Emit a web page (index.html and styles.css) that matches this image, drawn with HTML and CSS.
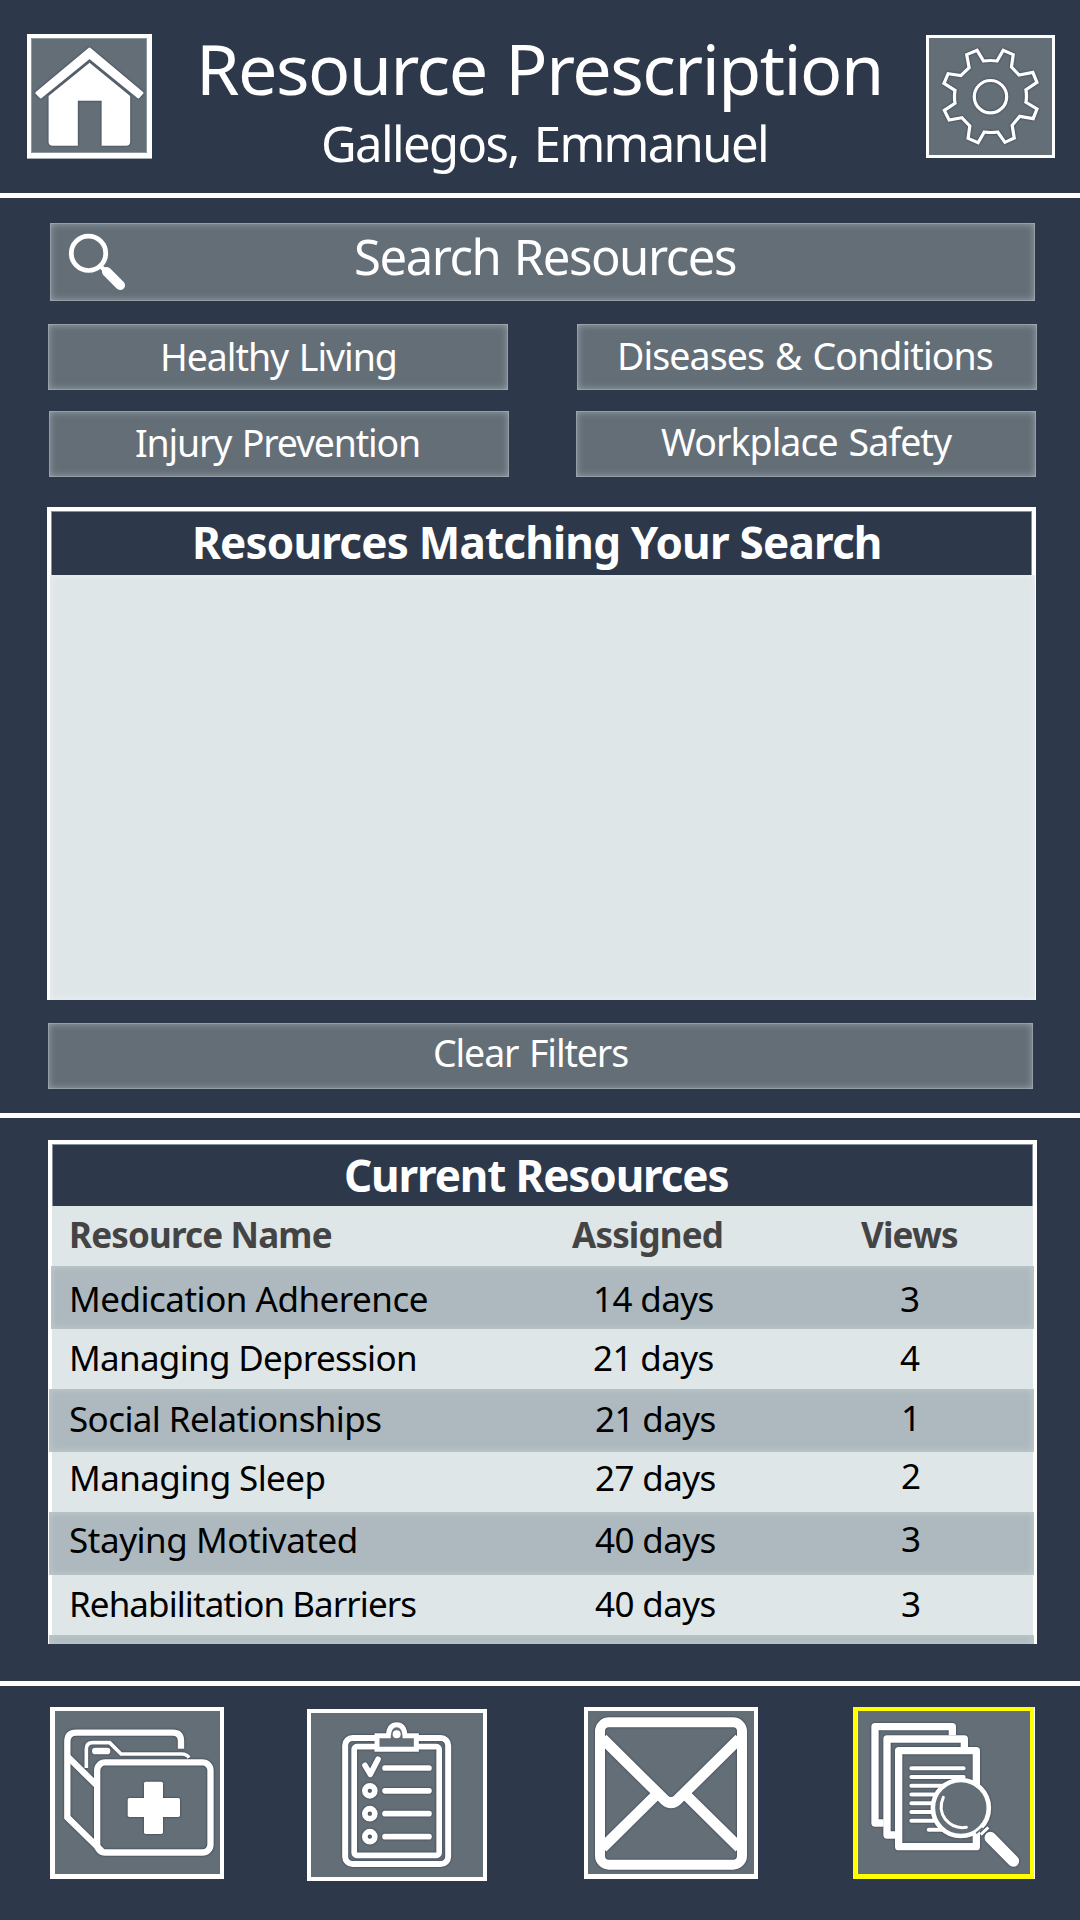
FILE: index.html
```
<!DOCTYPE html>
<html lang="en">
<head>
<meta charset="utf-8">
<title>Resource Prescription</title>
<link rel="stylesheet" href="styles.css">
</head>
<body>
<header class="header">
  <a class="home">
    <svg viewBox="31 38 116 115"><g transform="scale(.3444 .33333)" fill="#fff">
      <path d="M260 146L413 279L402 292L260 173L118 292L106 279Z" stroke="#fff" stroke-width="7" stroke-linejoin="round"/>
      <path d="M260 188L378 288V426Q378 437 366 437H295V302H226V437H153Q141 437 141 426V288Z"/>
    </g></svg>
  </a>
  <div class="titles">
    <h1 class="title">Resource Prescription</h1>
    <p class="patient">Gallegos, Emmanuel</p>
  </div>
  <a class="settings">
    <svg viewBox="929 38 123 117"><g transform="translate(540 0) scale(.3444 .33333)" fill="none" stroke="#fff" stroke-width="9.5">
      <path d="M1239 164L1269 151L1288 183Q1308 180 1327 183L1345 151L1374 164L1369 201L1391 225L1431 217L1443 247L1411 269Q1414 290 1411 307L1443 327L1432 356L1393 349L1371 376L1377 414L1350 427L1329 396Q1309 399 1290 396L1272 428L1243 415L1248 378L1225 353L1188 360L1174 331L1205 310Q1202 290 1205 271L1173 250L1185 221L1222 227L1246 203Z"/>
      <ellipse cx="1308" cy="290" rx="47" ry="48.5"/>
    </g></svg>
  </a>
</header>

<main class="search-area">
  <div class="field search">
    <svg viewBox="60 228 80 68"><g transform="scale(.3444 .33333)" fill="none" stroke="#fff" stroke-linecap="round">
      <ellipse cx="257" cy="760" rx="50" ry="51.5" stroke-width="14"/>
      <path d="M292 799L310 817" stroke-width="13"/>
      <path d="M310 815L349 856" stroke-width="28"/>
    </g></svg>
    <span>Search Resources</span>
  </div>
  <div class="filters">
    <button class="field healthy">Healthy Living</button>
    <button class="field diseases">Diseases &amp; Conditions</button>
    <button class="field injury">Injury Prevention</button>
    <button class="field workplace">Workplace Safety</button>
  </div>
  <section class="matches">
    <h2 class="panel-title">Resources Matching Your Search</h2>
    <div class="results"></div>
  </section>
  <button class="field clear">Clear Filters</button>
</main>

<section class="current-area">
  <div class="current">
    <h2 class="panel-title">Current Resources</h2>
    <div class="row head"><span>Resource Name</span><span>Assigned</span><span>Views</span></div>
    <div class="row dark r1"><span>Medication Adherence</span><span>14 days</span><span>3</span></div>
    <div class="row r2"><span>Managing Depression</span><span>21 days</span><span>4</span></div>
    <div class="row dark r3"><span>Social Relationships</span><span>21 days</span><span>1</span></div>
    <div class="row r4"><span>Managing Sleep</span><span>27 days</span><span>2</span></div>
    <div class="row dark r5"><span>Staying Motivated</span><span>40 days</span><span>3</span></div>
    <div class="row r6"><span>Rehabilitation Barriers</span><span>40 days</span><span>3</span></div>
    <div class="row dark r7"></div>
  </div>
</section>

<nav class="nav">
  <a class="tab records">
    <svg viewBox="55 1711 165 163"><g transform="translate(40 1690) scale(.33333)" fill="none" stroke="#fff" stroke-width="19">
      <path d="M423 176V153Q423 128 398 128H109Q82 128 82 155V382L186 484"/>
      <path d="M84 201L170 286"/>
      <path d="M139 234V177Q139 158 158 158H209L243 192H426Q440 192 447 203" stroke-width="11"/>
      <rect x="171.500" y="217" width="340" height="270.500" rx="24"/>
      <g fill="#fff" stroke="none">
        <rect x="156" y="173" width="55" height="20" rx="10"/>
        <rect x="312" y="275" width="57" height="157" rx="5"/>
        <rect x="263" y="324" width="157" height="57" rx="5"/>
      </g>
    </g></svg>
  </a>
  <a class="tab checklist">
    <svg viewBox="311 1713 172 164"><g transform="translate(290 1690) scale(.33333)" fill="none" stroke="#fff" stroke-width="17" stroke-linecap="round">
      <rect x="165.500" y="144" width="309" height="378" rx="22" stroke-width="18"/>
      <rect x="192.500" y="170" width="255" height="326" rx="8"/>
      <path d="M261 178V137H295Q297 104 320 104Q343 104 345 137H379V178Z" fill="#646e77" stroke-width="15"/>
      <circle cx="320" cy="133" r="12" fill="#fff" stroke="none"/>
      <path d="M225 226L241 253L264 208" stroke-linejoin="round"/>
      <path d="M285 234H417M285 302.500H417M285 371H417M285 440H417"/>
      <circle cx="239.500" cy="302.500" r="15" stroke-width="17"/>
      <circle cx="239.500" cy="371" r="15" stroke-width="17"/>
      <circle cx="239.500" cy="440" r="15" stroke-width="17"/>
    </g></svg>
  </a>
  <a class="tab mail">
    <svg viewBox="588 1711 166 163"><g transform="translate(570 1690) scale(.33333)" fill="none" stroke="#fff" stroke-width="30">
      <rect x="90" y="97" width="426" height="427" rx="27"/>
      <path d="M98 146L283 329Q303 347 323 329L508 146" stroke-width="32"/>
      <path d="M98 473L255 318M508 473L351 318" stroke-width="32"/>
    </g></svg>
  </a>
  <a class="tab resources">
    <svg viewBox="857 1711 173 163"><g transform="translate(840 1690) scale(.33333)" fill="none" stroke="#fff" stroke-width="22" stroke-linejoin="round">
      <path d="M337 136V110H105V399H131"/>
      <path d="M373 172V147H141V435H166"/>
      <rect x="176" y="182" width="233" height="288"/>
      <path d="M214 235H371M214 261H371M214 287.500H330M214 313.500H300M214 340H290M214 366H290M214 392.500H300M266 419H320" stroke-width="12" stroke-linecap="round"/>
      <circle cx="362.500" cy="354" r="84" fill="#646e77" stroke-width="14"/>
      <path d="M310 322Q294 357 316 388Q341 418 379 412" stroke-width="9" stroke-linecap="round"/>
      <path d="M408 430L428 414" stroke="#646e77" stroke-width="5"/>
      <path d="M422 434L445 412" stroke-width="9"/>
      <path d="M451 443L520 513" stroke-width="35" stroke-linecap="round"/>
    </g></svg>
  </a>
</nav>
</body>
</html>
```
FILE: styles.css
```
* { box-sizing: border-box; margin: 0; padding: 0; }

body {
  width: 1080px;
  height: 1920px;
  overflow: hidden;
  background: #2d394b;
  color: #fff;
  font-family: "Noto Sans", "Open Sans", sans-serif;
  white-space: nowrap;
}

svg { display: block; }
a svg { filter: drop-shadow(0 0 1px #2d394b); width: 100%; height: 100%; }
h1, h2 { font-weight: 400; }

/* header */
.header {
  display: flex;
  height: 198px;
  border-bottom: 5px solid #fff;
  padding-left: 27px;
}
.home {
  width: 125px;
  height: 124px;
  margin-top: 34px;
  border: solid #fff;
  border-width: 4px 5px 5px 4px;
  background: #646e77;
  box-shadow: 0 1px #a9afb6, inset 0 0 0 1px #8f979e;
}
.titles { width: 730px; margin: 28px 0 0 44px; }
.title { font-size: 70px; line-height: 80px; letter-spacing: -1.51px; word-spacing: 2px; }
.patient {
  margin-top: 5px;
  padding-left: 125px;
  font-size: 49px;
  line-height: 60px;
  letter-spacing: -1.64px;
  word-spacing: 4px;
}
.settings {
  width: 129px;
  height: 123px;
  margin-top: 35px;
  border: 3px solid #fff;
  background: #646e77;
}

/* buttons and search field */
.field {
  display: block;
  height: 66px;
  border: 0;
  background: #646e77;
  box-shadow: inset 0 0 0 1px rgba(255, 255, 255, .18), inset 0 0 7px 1px rgba(190, 200, 208, .55);
  color: #fff;
  font-family: inherit;
  font-size: 37.5px;
  text-align: left;
  white-space: nowrap;
  word-spacing: 2px;
}
.field.search {
  display: flex;
  width: 985px;
  height: 78px;
  margin: 25px 0 0 50px;
  font-size: 49px;
  line-height: 66px;
  letter-spacing: -1.45px;
}
.search svg { width: 80px; height: 68px; margin: 5px 214px 0 10px; }
.filters {
  display: grid;
  grid-template-columns: 528px 461px;
  gap: 21px 0;
  margin: 23px 0 0 48px;
}
.filters .field { display: flex; width: 460px; }
.healthy { padding-left: 112px; line-height: 65px; letter-spacing: -1.05px; }
.diseases { margin-left: 1px; padding-left: 40px; line-height: 63px; letter-spacing: -.89px; }
.injury { margin-left: 1px; padding-left: 86px; line-height: 63px; letter-spacing: -1.2px; }
.workplace { padding-left: 85px; line-height: 61px; letter-spacing: -.95px; }
.field.clear {
  display: flex;
  width: 985px;
  margin: 23px 0 0 48px;
  padding-left: 385px;
  line-height: 59px;
  letter-spacing: -1.13px;
}

/* panels */
.panel-title {
  border: 4px solid #fff;
  border-bottom: 0;
  background: #2d394b;
  box-shadow: inset 0 1px #87909a, inset 1px 0 #87909a, inset -1px 0 #87909a;
  font-size: 44px;
  font-weight: 700;
  line-height: 62px;
}
.search-area { height: 920px; border-bottom: 5px solid #fff; overflow: hidden; }
.matches {
  width: 989px;
  height: 493px;
  margin: 30px 0 0 47px;
  background: #fff;
}
.matches .panel-title { height: 68px; padding-left: 141px; letter-spacing: -.79px; }
.results {
  height: 425px;
  margin: 0 1px 0 3px;
  background: #dfe6e8;
  box-shadow: inset 0 0 6px #edf1f3;
}
.current-area { height: 568px; border-bottom: 5px solid #fff; overflow: hidden; }
.current { width: 989px; height: 504px; margin: 22px 0 0 48px; background: #fff; }
.current .panel-title { height: 66px; padding-left: 292px; letter-spacing: -1.15px; }

/* resource rows */
.row {
  display: grid;
  grid-template-columns: 526px 306px 1fr;
  height: 60px;
  margin: 0 4px;
  padding-left: 17px;
  background: #dfe6e8;
  color: #000;
  font-size: 35px;
  letter-spacing: -.6px;
}
.row.head {
  grid-template-columns: 503px 289px 1fr;
  color: #444;
  font-weight: 700;
  line-height: 57px;
  letter-spacing: -.83px;
}
.row.dark {
  height: 63px;
  margin: 0 3px 0 1px;
  padding-left: 20px;
  background: #adb9be;
  box-shadow: inset 0 0 6px 1px #bfcacd;
}
.row.r1 { grid-template-columns: 524px 307px 1fr; margin-left: 3px; padding-left: 18px; line-height: 66px; }
.r1 :first-child { letter-spacing: -.5px; }
.r2 { grid-template-columns: 524px 307px 1fr; line-height: 58px; }
.r2 :first-child { letter-spacing: -.7px; }
.r3 { line-height: 60px; }
.r3 :last-child { line-height: 58px; }
.r4 { line-height: 52px; }
.r4 :last-child { line-height: 48px; }
.r5 { line-height: 56px; }
.r5 :first-child { letter-spacing: -.45px; }
.r5 :last-child { line-height: 54px; }
.r6 { line-height: 58px; }
.r6 :first-child { letter-spacing: -.93px; }
.row.r7 { height: 9px; }

/* bottom navigation */
.nav { display: flex; padding: 21px 0 0 50px; }
.tab { height: 172px; border: 4px solid #fff; background: #646e77; }
.records { width: 174px; border-width: 4px 4px 5px 5px; }
.checklist { width: 180px; margin: 2px 0 0 83px; }
.mail { width: 174px; margin-left: 97px; border-bottom-width: 5px; }
.resources {
  width: 181px;
  margin-left: 95px;
  border-color: #ff0;
  border-bottom-width: 5px;
  box-shadow: 1px 0 #fff, inset 1px 0 #fff;
}
```
